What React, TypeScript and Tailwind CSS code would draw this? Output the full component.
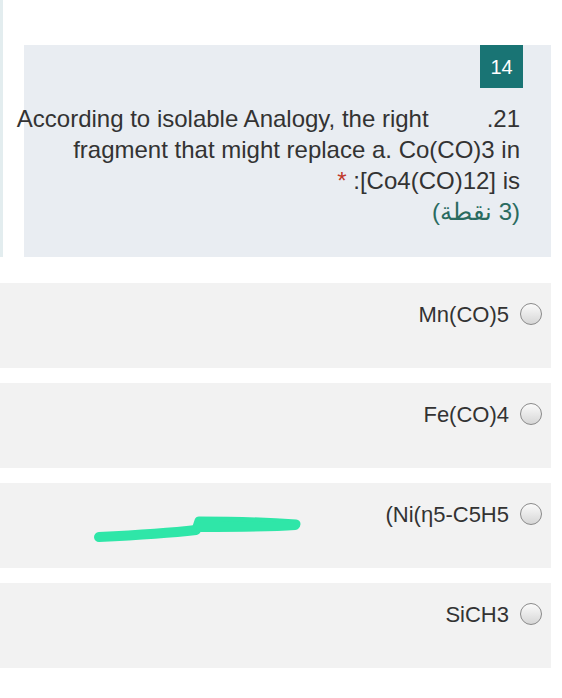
import React from 'react';

const options = ['Mn(CO)5', 'Fe(CO)4', '(Ni(η5-C5H5', 'SiCH3'];

function Radio() {
  return (
    <div className="w-[22px] h-[22px] rounded-full border-[1.5px] border-[#8a8a8a] bg-linear-to-b from-[#fbfbfb] to-[#d6d6d6] flex-shrink-0" />
  );
}

// hand-drawn highlighter mark over the third option
function Scribble() {
  return (
    <svg className="absolute left-0 top-0" width="562" height="85" viewBox="0 0 562 85">
      <path
        d="M99 54 C140 52 170 50 196 47"
        stroke="#2fe6a8"
        strokeWidth="10"
        strokeLinecap="round"
        fill="none"
      />
      <path
        d="M196 47 L199 38 C235 38 268 39 296 41"
        stroke="#2fe6a8"
        strokeWidth="9"
        strokeLinecap="round"
        strokeLinejoin="round"
        fill="none"
      />
      <path
        d="M201 44 C238 44 268 44 295 42"
        stroke="#2fe6a8"
        strokeWidth="10"
        strokeLinecap="round"
        fill="none"
      />
    </svg>
  );
}

export default function App() {
  return (
    <div
      className="w-[562px] h-[698px] bg-white text-[#333]"
      style={{ fontFamily: '"Liberation Sans", Arial, "Noto Sans", sans-serif' }}
    >
      {/* Question header */}
      <div className="border-l-[3px] border-[#e3edef] pt-[45px] pr-[11px] pl-[21px]">
        <div className="bg-[#e9edf2] h-[212px] flex flex-col items-end pr-[28px]">
          <div className="w-[43px] h-[43px] bg-[#197474] text-white text-[20px] flex items-center justify-center">
            14
          </div>
          <div className="mt-[15px] mr-[3px] flex flex-col items-end text-[24px] leading-[31px] whitespace-nowrap">
            <div className="flex gap-[58px]">
              <span>According to isolable Analogy, the right</span>
              <span>.21</span>
            </div>
            <div>fragment that might replace a. Co(CO)3 in</div>
            <div>
              <span className="text-[#c0392b]">*</span> :[Co4(CO)12] is
            </div>
            <div dir="rtl" className="text-[#2a6b60]">
              {'(3 \u0646\u0642\u0637\u0629)'}
            </div>
          </div>
        </div>
      </div>

      {/* Options */}
      <div className="mt-[26px] pr-[11px] flex flex-col gap-[15px]">
        {options.map((opt, i) => (
          <div key={i} className="relative h-[85px] bg-[#f2f2f2] pt-[18px] pr-[9px]">
            {i === 2 && <Scribble />}
            <div className="flex items-center justify-end gap-[11px] h-[26px] text-[22px]">
              <span>{opt}</span>
              <Radio />
            </div>
          </div>
        ))}
      </div>
    </div>
  );
}
